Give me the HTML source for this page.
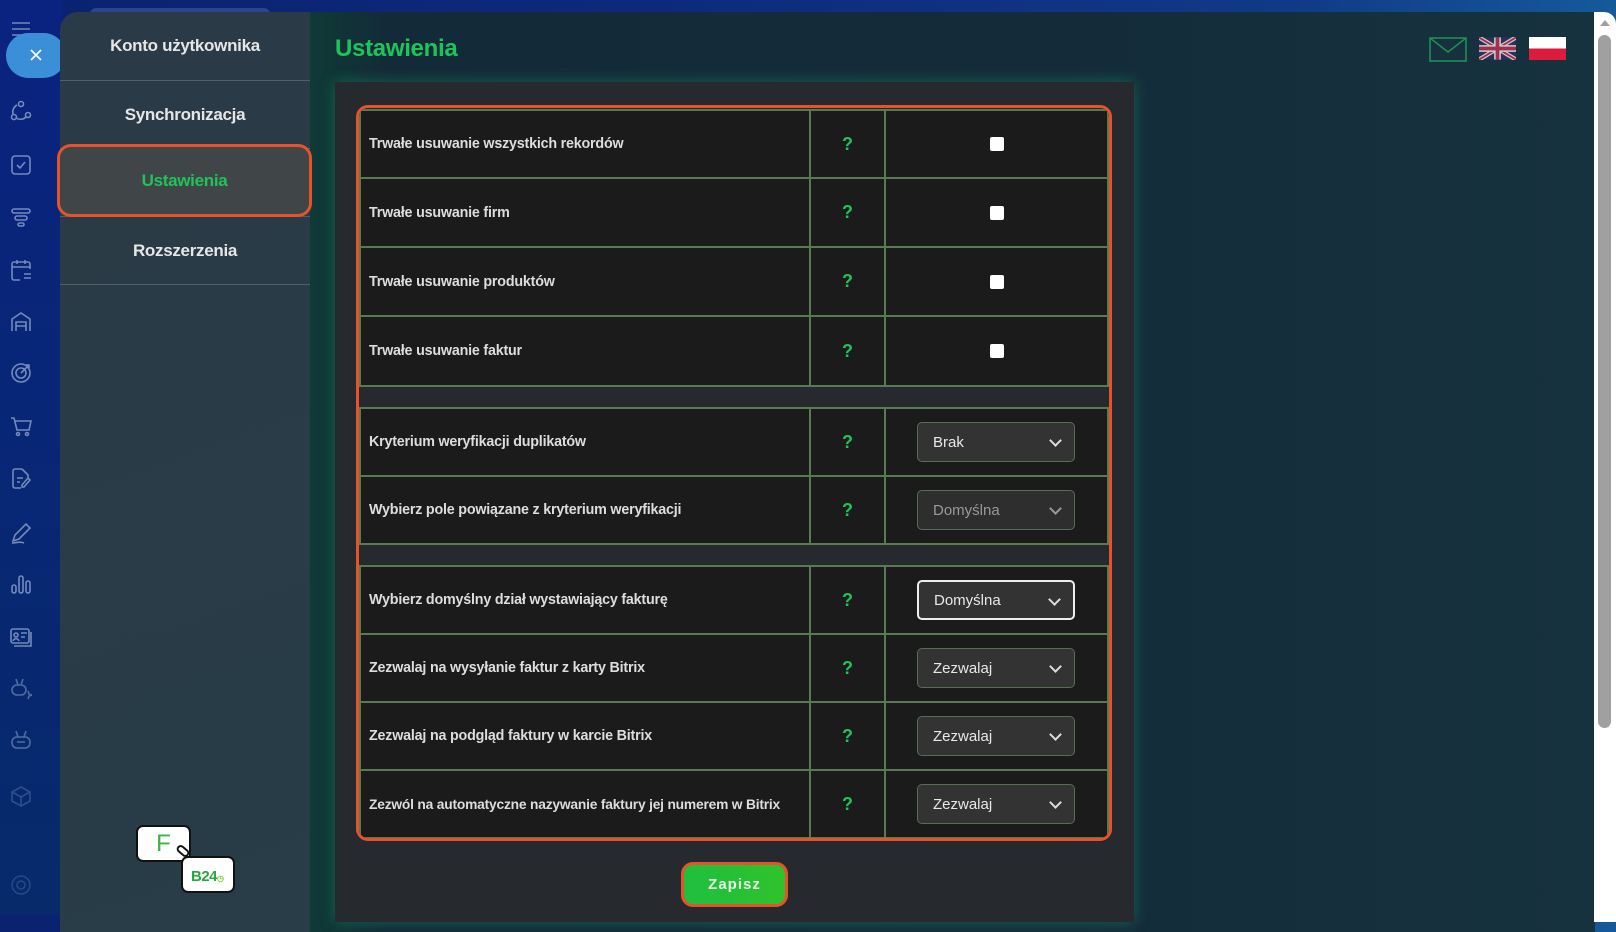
<!DOCTYPE html>
<html><head><meta charset="utf-8"><style>
*{box-sizing:border-box;margin:0;padding:0}
body{width:1616px;height:915px;overflow:hidden;font-family:"Liberation Sans",Arial,sans-serif;background:linear-gradient(90deg,#0a2270 0%,#0d2a7a 40%,#103a85 80%,#155a9a 100%);position:relative}
.side{position:absolute;left:0;top:0;width:62px;height:915px;background:linear-gradient(180deg,#0a2380,#062a6a)}
.ic{position:absolute;left:10px;width:22px;height:22px;stroke:#8fa3cc;fill:none;stroke-width:1.6;opacity:.8}
.closebtn{position:absolute;left:6px;top:33px;width:60px;height:45px;border-radius:23px;background:#3a8fd8}
.panel{position:absolute;left:60px;top:12px;width:1535px;height:920px;border-radius:18px 0 0 0;overflow:hidden;background:#132a38}
.menu{position:absolute;left:0;top:0;width:250px;height:920px;background:linear-gradient(160deg,#2a3a46,#283d48)}
.mi{position:absolute;left:0;width:250px;height:68px;display:flex;align-items:center;justify-content:center;font-weight:bold;font-size:17px;color:#e6e6e6;border-bottom:1px solid #4e606c;letter-spacing:-.3px}
.main{position:absolute;left:250px;top:0;right:0;height:920px;background:linear-gradient(90deg,#0f3a36 0%,#132a38 6%,#142c3a 60%,#17323f 100%)}
.title{position:absolute;left:335px;top:35px;color:#1ec45a;font-size:24px;font-weight:bold;letter-spacing:-.3px}
.card{position:absolute;left:335px;top:82px;width:799px;height:840px;background:#262a2e;box-shadow:0 0 14px rgba(30,200,120,.35)}
.tbl{position:absolute;left:356px;top:105px;width:756px;height:736px;border:3px solid #e8522a;border-radius:12px;background:#262a2e;overflow:hidden}
.row{position:absolute;left:0;width:750px;background:#1b1b1b;border-top:2px solid #587b52;border-bottom:2px solid #587b52}
.row .lab{position:absolute;left:0;top:0;bottom:0;width:452px;border-left:2px solid #587b52;border-right:2px solid #587b52;display:flex;align-items:center;padding-left:8px;color:#ddd;font-weight:bold;font-size:14.3px;letter-spacing:-.2px}
.row .q{position:absolute;left:452px;top:0;bottom:0;width:75px;border-right:2px solid #587b52;display:flex;align-items:center;justify-content:center;color:#1ec45a;font-weight:bold;font-size:18px}
.row .v{position:absolute;left:527px;top:0;bottom:0;right:0;border-right:2px solid #587b52;display:flex;align-items:center;justify-content:center}
.cb{width:14px;height:14px;background:#fff;border-radius:2px}
.sel{width:158px;height:40px;border:1px solid #566e55;border-radius:5px;background:#333;color:#e8e8e8;font-size:15px;display:flex;align-items:center;padding-left:15px;position:relative;margin-left:-1px}
.sel:after{content:"";position:absolute;right:14px;top:13px;width:7px;height:7px;border-right:2px solid #ddd;border-bottom:2px solid #ddd;transform:rotate(45deg)}
.sel.dis{color:#999;background:#2e2e2e}
.sel.dis:after{border-color:#999}
.sel.act{border:2px solid #eee}
.btn{position:absolute;left:681px;top:862px;width:107px;height:45px;border:3px solid #e8522a;border-radius:12px;background:linear-gradient(90deg,#1fbf3f,#2fc22c);color:#e8f5e8;font-weight:bold;font-size:15px;display:flex;align-items:center;justify-content:center;letter-spacing:1px}
</style></head><body>
<div class="side">
<svg class="ic" style="top:18px" viewBox="0 0 22 22"><path d="M2 5h18M2 11h18M2 17h18"/></svg>
<svg class="ic" style="top:100px" viewBox="0 0 22 22"><circle cx="11" cy="4" r="2.5"/><circle cx="4" cy="17" r="2.5"/><circle cx="18" cy="15" r="2.5"/><path d="M7 5a8 8 0 0 0-4 9M6 18a8 8 0 0 0 10 -1"/></svg>
<svg class="ic" style="top:154px" viewBox="0 0 22 22"><rect x="2" y="2" width="18" height="18" rx="3"/><path d="M7 11l3 3 5-6"/></svg>
<svg class="ic" style="top:206px" viewBox="0 0 22 22"><rect x="2" y="3" width="18" height="4" rx="2"/><rect x="5" y="10" width="12" height="4" rx="2"/><rect x="8" y="17" width="6" height="3" rx="1.5"/></svg>
<svg class="ic" style="top:259px" viewBox="0 0 22 22"><path d="M20 10V5a2 2 0 0 0-2-2H4a2 2 0 0 0-2 2v14a2 2 0 0 0 2 2h6M2 8h18M7 1v4M15 1v4M14 15h7M14 19h7"/></svg>
<svg class="ic" style="top:311px" viewBox="0 0 22 22"><path d="M2 20V8l9-6 9 6v12M6 20V11h10v9M6 15h10"/></svg>
<svg class="ic" style="top:362px" viewBox="0 0 22 22"><circle cx="11" cy="11" r="9"/><circle cx="11" cy="11" r="5"/><path d="M11 11l8-8M16 3h3v3"/></svg>
<svg class="ic" style="top:415px" viewBox="0 0 22 22"><path d="M1 3h3l3 12h12l2-9H5"/><circle cx="8" cy="19" r="1.5"/><circle cx="17" cy="19" r="1.5"/></svg>
<svg class="ic" style="top:467px" viewBox="0 0 22 22"><path d="M12 2H5a2 2 0 0 0-2 2v15a2 2 0 0 0 2 2h6M12 2l6 6v3M7 11h6M7 15h3M20 13l-6 7h-2v-2l6-7z"/></svg>
<svg class="ic" style="top:522px" viewBox="0 0 22 22"><path d="M3 19l2-6 11-11 4 4-11 11zM2 21c4 0 8-2 12 0"/></svg>
<svg class="ic" style="top:573px" viewBox="0 0 22 22"><rect x="2" y="12" width="4" height="8" rx="2"/><rect x="9" y="3" width="4" height="17" rx="2"/><rect x="16" y="8" width="4" height="12" rx="2"/></svg>
<svg class="ic" style="top:626px" viewBox="0 0 22 22"><rect x="1" y="3" width="18" height="14" rx="2"/><circle cx="6" cy="9" r="2"/><path d="M3 15c1-3 5-3 6 0M11 7h6M11 11h4M4 20h17V6"/></svg>
<svg class="ic" style="top:677px;opacity:.55" viewBox="0 0 22 22"><rect x="2" y="8" width="14" height="10" rx="5"/><path d="M6 2l2 6M13 2l-2 6M18 14l1 3 3 1-3 1-1 3"/></svg>
<svg class="ic" style="top:729px;opacity:.55" viewBox="0 0 22 22"><rect x="2" y="8" width="18" height="11" rx="5"/><path d="M6 2l2 6M16 2l-2 6M7 13h8"/></svg>
<svg class="ic" style="top:785px;opacity:.3" viewBox="0 0 22 22"><path d="M11 2l9 5v9l-9 5-9-5V7zM2 7l9 5 9-5M11 12v9"/></svg>
<svg class="ic" style="top:874px;opacity:.25" viewBox="0 0 22 22"><circle cx="11" cy="11" r="4"/><circle cx="11" cy="11" r="9"/></svg>
</div>
<div style="position:absolute;left:90px;top:8px;width:180px;height:12px;border-radius:8px;background:#2a4590"></div>
<div class="closebtn"><svg style="position:absolute;left:23px;top:15px" width="14" height="14" viewBox="0 0 14 14"><path d="M2 2l10 10M12 2L2 12" stroke="#fff" stroke-width="1.6"/></svg></div>
<div class="panel">
 <div class="menu">
  <div class="mi" style="top:0;height:69px">Konto użytkownika</div>
  <div class="mi" style="top:69px">Synchronizacja</div>
  <div class="mi" style="top:137px;border-bottom:1px solid #4e606c"></div>
  <div class="mi" style="top:205px">Rozszerzenia</div>
 </div>
 <div class="main"></div>
</div>
<div style="position:absolute;left:57px;top:144px;width:255px;height:73px;border:3px solid #e8522a;border-radius:14px;background:#404548;display:flex;align-items:center;justify-content:center;color:#1ec45a;font-weight:bold;font-size:17px;letter-spacing:-.3px">Ustawienia</div>
<div style="position:absolute;left:136px;top:825px;width:55px;height:37px;background:#fff;border:2px solid #111;border-radius:7px;color:#3bb34a;font-size:24px;text-align:center;line-height:33px">F</div>
<div style="position:absolute;left:181px;top:856px;width:54px;height:37px;background:#fff;border:2px solid #111;border-radius:7px;color:#2aa63e;font-size:15px;font-weight:bold;padding:10px 0 0 8px;letter-spacing:-.5px">B24<span style="font-size:8px;color:#8c3">◷</span></div>
<div style="position:absolute;left:176px;top:847px;width:14px;height:8px;border:2px solid #111;border-radius:4px;transform:rotate(40deg);background:#fff"></div>
<div style="position:absolute;left:1594px;top:12px;width:22px;height:910px;background:#fff;border-radius:0 12px 0 0"></div>
<div style="position:absolute;left:1600px;top:20px;width:0;height:0;border-left:5px solid transparent;border-right:5px solid transparent;border-bottom:6px solid #a0a0a0"></div>
<div style="position:absolute;left:1598px;top:35px;width:13px;height:693px;background:#a0a0a0;border-radius:7px"></div>
<div class="title">Ustawienia</div>
<svg style="position:absolute;left:1429px;top:37px" width="38" height="25" viewBox="0 0 38 25"><rect x="1" y="1" width="36" height="23" fill="none" stroke="#1d8f55" stroke-width="1.6"/><path d="M1 1l18 14L37 1" fill="none" stroke="#1d8f55" stroke-width="1.6"/></svg>
<svg style="position:absolute;left:1479px;top:37px" width="37" height="23" viewBox="0 0 60 36"><rect width="60" height="36" fill="#2a2f5e"/><path d="M0 0l60 36M60 0L0 36" stroke="#ccc" stroke-width="7"/><path d="M0 0l60 36M60 0L0 36" stroke="#a03050" stroke-width="3"/><path d="M30 0v36M0 18h60" stroke="#ccc" stroke-width="11"/><path d="M30 0v36M0 18h60" stroke="#a03050" stroke-width="6"/></svg>
<div style="position:absolute;left:1529px;top:37px;width:37px;height:23px;background:linear-gradient(#fff 50%,#dc1c3c 50%)"></div>
<div class="card"></div>
<div class="tbl">
 <div class="row" style="top:1px;height:70px"><div class="lab">Trwałe usuwanie wszystkich rekordów</div><div class="q">?</div><div class="v"><div class="cb"></div></div></div>
 <div class="row" style="top:69px;height:71px"><div class="lab">Trwałe usuwanie firm</div><div class="q">?</div><div class="v"><div class="cb"></div></div></div>
 <div class="row" style="top:138px;height:71px"><div class="lab">Trwałe usuwanie produktów</div><div class="q">?</div><div class="v"><div class="cb"></div></div></div>
 <div class="row" style="top:207px;height:72px"><div class="lab">Trwałe usuwanie faktur</div><div class="q">?</div><div class="v"><div class="cb"></div></div></div>
 <div class="row" style="top:299px;height:70px"><div class="lab">Kryterium weryfikacji duplikatów</div><div class="q">?</div><div class="v"><div class="sel">Brak</div></div></div>
 <div class="row" style="top:367px;height:70px"><div class="lab">Wybierz pole powiązane z kryterium weryfikacji</div><div class="q">?</div><div class="v"><div class="sel dis">Domyślna</div></div></div>
 <div class="row" style="top:457px;height:70px"><div class="lab">Wybierz domyślny dział wystawiający fakturę</div><div class="q">?</div><div class="v"><div class="sel act">Domyślna</div></div></div>
 <div class="row" style="top:525px;height:70px"><div class="lab">Zezwalaj na wysyłanie faktur z karty Bitrix</div><div class="q">?</div><div class="v"><div class="sel">Zezwalaj</div></div></div>
 <div class="row" style="top:593px;height:70px"><div class="lab">Zezwalaj na podgląd faktury w karcie Bitrix</div><div class="q">?</div><div class="v"><div class="sel">Zezwalaj</div></div></div>
 <div class="row" style="top:661px;height:70px"><div class="lab" style="font-size:13.8px">Zezwól na automatyczne nazywanie faktury jej numerem w Bitrix</div><div class="q">?</div><div class="v"><div class="sel">Zezwalaj</div></div></div>
</div>
<div class="btn">Zapisz</div>
</body></html>
